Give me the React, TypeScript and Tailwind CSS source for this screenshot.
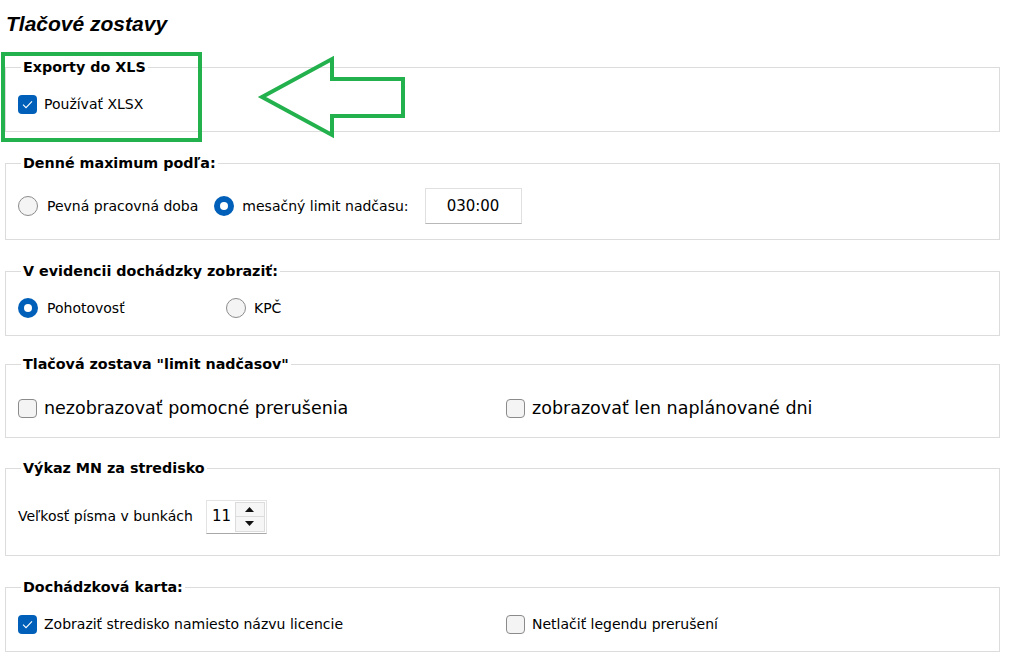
import React from "react";

const body = { fontFamily: '"DejaVu Sans", Verdana, sans-serif' };

const CheckBox = ({ checked }: { checked?: boolean }) =>
  checked ? (
    <span className="flex h-[19px] w-[19px] shrink-0 items-center justify-center rounded-[4px] bg-[#005fb8]">
      <svg width="11" height="9" viewBox="0 0 11 9" fill="none">
        <path d="M1 4.6 L4 7.6 L10 1.4" stroke="#fff" strokeWidth="1.1" />
      </svg>
    </span>
  ) : (
    <span className="h-[19px] w-[19px] shrink-0 rounded-[4px] border border-[#8b8b8b] bg-[#f4f4f4]" />
  );

const Radio = ({ checked }: { checked?: boolean }) =>
  checked ? (
    <span className="flex h-[20px] w-[20px] shrink-0 items-center justify-center rounded-full bg-[#005fb8]">
      <span className="h-[8px] w-[8px] rounded-full bg-white" />
    </span>
  ) : (
    <span className="h-[20px] w-[20px] shrink-0 rounded-full border border-[#8b8b8b] bg-[#f4f4f4]" />
  );

const Group = ({
  title,
  className,
  children,
}: {
  title: string;
  className: string;
  children: React.ReactNode;
}) => (
  <fieldset className="border border-[#dcdcdc] bg-white">
    <legend className="ml-[15px] px-[2px] text-[14.3px] font-bold leading-[20px] text-black">
      {title}
    </legend>
    <div className={"flex items-center pl-[12px] text-[14px] text-black " + className}>
      {children}
    </div>
  </fieldset>
);

export default function App() {
  return (
    <div className="relative h-[655px] w-[1009px] overflow-hidden bg-white" style={body}>
      <div className="flex flex-col pl-[5px] pr-[9px]">
        <h1
          className="ml-[1px] mt-[12px] h-[24px] text-[21px] font-bold italic leading-[24px] text-black"
          style={{ fontFamily: '"Liberation Sans", Arial, sans-serif' }}
        >
          Tlačové zostavy
        </h1>

        <div className="mt-[21px]">
          <Group title="Exporty do XLS" className="h-[54px]">
            <label className="flex items-center gap-[7px]">
              <CheckBox checked />
              <span>Používať XLSX</span>
            </label>
          </Group>
        </div>

        <div className="mt-[21px]">
          <Group title="Denné maximum podľa:" className="h-[66px]">
            <label className="flex items-center gap-[9px]">
              <Radio />
              <span>Pevná pracovná doba</span>
            </label>
            <label className="ml-[16px] flex items-center gap-[8px]">
              <Radio checked />
              <span>mesačný limit nadčasu:</span>
            </label>
            <div className="ml-[16px] flex h-[36px] w-[97px] items-center justify-center border border-[#e0e0e0] border-b-[#b8b8b8] text-[15px]">
              030:00
            </div>
          </Group>
        </div>

        <div className="mt-[21px]">
          <Group title="V evidencii dochádzky zobraziť:" className="h-[54px]">
            <label className="flex w-[208px] items-center gap-[9px]">
              <Radio checked />
              <span>Pohotovosť</span>
            </label>
            <label className="flex items-center gap-[8px]">
              <Radio />
              <span>KPČ</span>
            </label>
          </Group>
        </div>

        <div className="mt-[18px]">
          <Group title={'Tlačová zostava "limit nadčasov"'} className="h-[63px] pt-[5px]">
            <label className="flex w-[488px] items-center gap-[7px] text-[17.5px]">
              <CheckBox />
              <span>nezobrazovať pomocné prerušenia</span>
            </label>
            <label className="flex items-center gap-[7px] text-[17.5px]">
              <CheckBox />
              <span>zobrazovať len naplánované dni</span>
            </label>
          </Group>
        </div>

        <div className="mt-[20px]">
          <Group title="Výkaz MN za stredisko" className="h-[77px]">
            <span>Veľkosť písma v bunkách</span>
            <div className="ml-[13px] flex h-[34px] w-[61px] border border-[#e3e3e3] border-b-[#a8a8a8]">
              <span className="flex w-[28px] items-center pl-[5px] text-[15px]">11</span>
              <div className="flex flex-col py-[1px]">
                <button className="flex h-[16px] w-[30px] items-center justify-center border border-[#dcdcdc] bg-[#f6f6f6]">
                  <svg width="9" height="5" viewBox="0 0 9 5">
                    <path d="M0 5 L4.5 0 L9 5 Z" fill="#111" />
                  </svg>
                </button>
                <button className="flex h-[16px] w-[30px] items-center justify-center border border-t-0 border-[#dcdcdc] bg-[#f6f6f6]">
                  <svg width="9" height="5" viewBox="0 0 9 5">
                    <path d="M0 0 L9 0 L4.5 5 Z" fill="#111" />
                  </svg>
                </button>
              </div>
            </div>
          </Group>
        </div>

        <div className="mt-[21px]">
          <Group title="Dochádzková karta:" className="h-[54px]">
            <label className="flex w-[488px] items-center gap-[7px]">
              <CheckBox checked />
              <span>Zobraziť stredisko namiesto názvu licencie</span>
            </label>
            <label className="flex items-center gap-[7px]">
              <CheckBox />
              <span>Netlačiť legendu prerušení</span>
            </label>
          </Group>
        </div>
      </div>

      <svg
        className="pointer-events-none absolute left-0 top-0"
        width="1009"
        height="655"
        viewBox="0 0 1009 655"
        fill="none"
      >
        <rect x="3" y="54" width="197" height="86" stroke="#22b14c" strokeWidth="4" />
        <polygon
          points="262,97 332,59 332,79 403,79 403,116 332,116 332,135"
          stroke="#22b14c"
          strokeWidth="4"
          strokeLinejoin="miter"
        />
      </svg>
    </div>
  );
}
